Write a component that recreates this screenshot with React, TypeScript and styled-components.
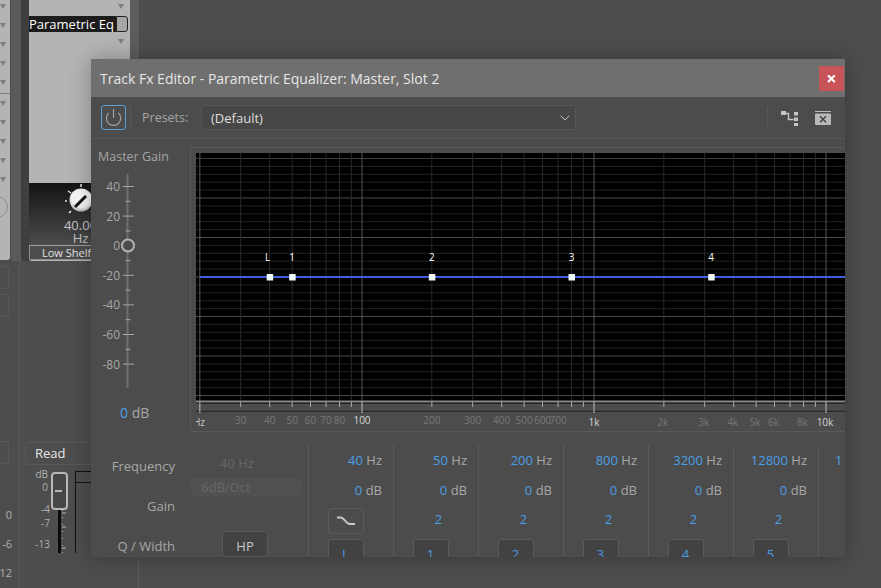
import React from 'react';
import styled, { createGlobalStyle } from 'styled-components';
import { Power, ChevronDown } from 'lucide-react';

const GlobalStyle = createGlobalStyle`
    html, body {
        margin: 0;
        padding: 0;
        background: #4d4d4d;
    }
    body {
        font-family: 'Open Sans', 'Liberation Sans', sans-serif;
    }
`;

const BLUE = '#4a9fe6';

// x position in the graph svg, 232px a decade with 100Hz at x=166
const freqX = (hz: number) => 166 + 232 * Math.log10(hz / 100);
const dbY = (db: number) => 5.5 + (40 - db) * 1.975;

const minorFreqs = [30, 40, 50, 60, 70, 80, 90, 200, 300, 400, 500, 600, 700, 800, 900, 2000, 3000, 4000, 5000, 6000, 7000, 8000, 9000];
const majorFreqs = [20, 100, 1000, 10000];
const freqLabels: [number, string][] = [[30, '30'], [40, '40'], [50, '50'], [60, '60'], [70, '70'], [80, '80'], [200, '200'], [300, '300'], [400, '400'], [500, '500'], [600, '600'], [700, '700']];
const kLabels: [number, string][] = [[2000, '2k'], [3000, '3k'], [4000, '4k'], [5000, '5k'], [6000, '6k'], [8000, '8k']];
const nodes: [number, string][] = [[40, 'L'], [50, '1'], [200, '2'], [800, '3'], [3200, '4']];

const dbLines: number[] = [];
for (let db = 40; db >= -88; db -= 4) dbLines.push(db);

const bands = [
    { hz: '40', q: null, btn: 'L' },
    { hz: '50', q: '2', btn: '1' },
    { hz: '200', q: '2', btn: '2' },
    { hz: '800', q: '2', btn: '3' },
    { hz: '3200', q: '2', btn: '4' },
    { hz: '12800', q: '2', btn: '5' },
];

const Graph = () => (
    <svg width="649" height="279" viewBox="0 0 649 279" style={{ display: 'block' }}>
        <rect x="0" y="0" width="649" height="248" fill="#000" />
        {dbLines.map(db => (
            <line key={db} x1="0" x2="649" y1={dbY(db)} y2={dbY(db)}
                stroke={db % 20 === 0 ? (db === 40 ? '#3a3a3a' : '#4a4a4a') : '#222'} strokeWidth="1" />
        ))}
        {minorFreqs.map(f => (
            <g key={f}>
                <line x1={freqX(f)} x2={freqX(f)} y1="0" y2="248" stroke="#2a2a2a" />
                <line x1={freqX(f)} x2={freqX(f)} y1="248" y2="254" stroke="#aaa" />
            </g>
        ))}
        {majorFreqs.map(f => (
            <g key={f}>
                <line x1={freqX(f)} x2={freqX(f)} y1="0" y2="248" stroke="#555" />
                <line x1={freqX(f)} x2={freqX(f)} y1="248" y2="260" stroke="#bbb" />
            </g>
        ))}
        <rect x="0" y="247.5" width="649" height="1.5" fill="#8a8a8a" />
        <line x1="4" x2="649" y1={dbY(-20)} y2={dbY(-20)} stroke="#3f5fe0" strokeWidth="2" />
        {nodes.map(([f, n]) => (
            <g key={n}>
                <rect x={freqX(f) - 3} y={dbY(-20) - 3} width="6.5" height="6.5" fill="#eef8f8" />
                <text x={freqX(f) - (n === 'L' ? 2 : 0)} y="108" fontSize="10" fill="#fff" textAnchor="middle" fontFamily="'Open Sans', sans-serif">{n}</text>
            </g>
        ))}
        {freqLabels.map(([f, t]) => (
            <text key={t} x={freqX(f)} y="271" fontSize="10" fill="#777" textAnchor="middle" fontFamily="'Open Sans', sans-serif">{t}</text>
        ))}
        {kLabels.map(([f, t]) => (
            <text key={t} x={freqX(f) - 1} y="273" fontSize="10" fill="#777" textAnchor="middle" fontFamily="'Open Sans', sans-serif">{t}</text>
        ))}
        <text x="166" y="271" fontSize="10" fill="#d6d6d6" textAnchor="middle" fontFamily="'Open Sans', sans-serif">100</text>
        <text x="398" y="273" fontSize="10" fill="#d6d6d6" textAnchor="middle" fontFamily="'Open Sans', sans-serif">1k</text>
        <text x="629" y="273" fontSize="10" fill="#d6d6d6" textAnchor="middle" fontFamily="'Open Sans', sans-serif">10k</text>
        <text x="-3" y="273" fontSize="10" fill="#c8c8c8" fontFamily="'Open Sans', sans-serif">Hz</text>
    </svg>
);

const gainLabels = [40, 20, 0, -20, -40, -60, -80];

const GainSlider = () => (
    <svg width="60" height="222" viewBox="0 0 60 222" style={{ display: 'block' }}>
        <rect x="35.5" y="0" width="2" height="214" fill="#6e6e6e" />
        {gainLabels.map((g, i) => {
            const y = 12.5 + i * 29.6;
            return (
                <g key={g}>
                    {g !== 0 && <line x1="32" x2="43" y1={y} y2={y} stroke="#a8a8a8" />}
                    {i < 6 && <line x1="34.5" x2="39.5" y1={y + 14.8} y2={y + 14.8} stroke="#a8a8a8" />}
                    <text x="29" y={y + 4.5} fontSize="12" fill="#a8a8a8" textAnchor="end" fontFamily="'Open Sans', sans-serif">{g}</text>
                </g>
            );
        })}
        <circle cx="37" cy="71.5" r="6" fill="#4c4c4c" stroke="#b4b4b4" strokeWidth="2" />
    </svg>
);

const GraphIcon = () => (
    <svg width="17" height="16" viewBox="0 0 17 16">
        <rect x="0" y="1" width="5" height="4" fill="#c4c4c4" />
        <path d="M4 3.5h3.5v6h5" stroke="#c4c4c4" strokeWidth="1.4" fill="none" />
        <rect x="13" y="2" width="4" height="3.5" fill="#c4c4c4" />
        <rect x="13" y="7.5" width="4" height="3.5" fill="#c4c4c4" />
        <rect x="13" y="13" width="4" height="3" fill="#c4c4c4" />
    </svg>
);

const ClearIcon = () => (
    <svg width="16" height="14" viewBox="0 0 16 14">
        <rect x="0" y="0" width="16" height="1" fill="#bbb" />
        <rect x="0" y="2.5" width="16" height="11.5" rx="1" fill="#b8b8b8" />
        <path d="M5 5.2l6 6M11 5.2l-6 6" stroke="#3c3c3c" strokeWidth="1.3" />
    </svg>
);

const ShelfIcon = () => (
    <svg width="20" height="10" viewBox="0 0 20 10">
        <path d="M1 1.5h4c3 0 5 6.5 9 6.5h5" stroke="#c8c8c8" strokeWidth="1.8" fill="none" />
    </svg>
);

const KnobDrawing = () => (
    <svg width="36" height="36" viewBox="0 0 36 36">
        <defs>
            <radialGradient id="knobFace" cx="50%" cy="40%" r="60%">
                <stop offset="0%" stopColor="#ffffff" />
                <stop offset="70%" stopColor="#f2f2f2" />
                <stop offset="100%" stopColor="#b0b0b0" />
            </radialGradient>
        </defs>
        <g stroke="#e8e8e8" strokeWidth="1.5">
            <path d="M18 1v3M5 8l3 2M31 8l-3 2M2 18h2M34 18h-2M6 30l2-2M30 30l-2-2" />
        </g>
        <circle cx="18" cy="17" r="11.5" fill="url(#knobFace)" />
        <path d="M12 24L23 13" stroke="#111" strokeWidth="3" />
    </svg>
);

const FaderScale = () => (
    <svg width="120" height="88" viewBox="0 0 120 88" style={{ display: 'block' }}>
        <g fontFamily="'Open Sans', sans-serif" fontSize="10" fill="#b0b0b0" textAnchor="end">
            <text x="28" y="13">dB</text>
            <text x="28" y="26">0</text>
            <text x="30" y="48">-4</text>
            <text x="30" y="62">-7</text>
            <text x="30" y="83">-13</text>
            <text x="111" y="80">-12</text>
        </g>
        <rect x="38" y="45" width="3" height="43" fill="#0c0c0c" />
        <line x1="42.5" x2="42.5" y1="45" y2="88" stroke="#b8b8b8" strokeDasharray="1 6" />
        <line x1="42" x2="46" y1="48" y2="48" stroke="#b8b8b8" />
        <line x1="42" x2="46" y1="62" y2="62" stroke="#b8b8b8" />
        <line x1="42" x2="46" y1="83" y2="83" stroke="#b8b8b8" />
        <path d="M55.5 88V6.5H71M55.5 17.5H91" stroke="#111" fill="none" />
        <line x1="88.5" x2="88.5" y1="60" y2="88" stroke="#111" />
        <line x1="90" x2="90" y1="60" y2="88" stroke="#b8b8b8" strokeDasharray="1 6" />
        <line x1="92" x2="96" y1="75.5" y2="75.5" stroke="#b8b8b8" />
        <rect x="32" y="8" width="15" height="36" rx="3" fill="#474747" stroke="#b8b8b8" strokeWidth="2" />
        <rect x="35" y="25" width="7" height="2" fill="#b8b8b8" />
    </svg>
);

const App = () => (
    <Desktop>
        <GlobalStyle />
        <Mixer>
            <EdgeStrip>
                <EdgeRack>
                    {[0, 1, 2, 3, 4].map(i => <RackArrow key={i} />)}
                    <RackRule />
                    {[5, 6, 7, 8, 9].map(i => <RackArrow key={i} />)}
                    <RackDial />
                </EdgeRack>
                <EdgeStub $top={6} />
                <EdgeStub $top={5} />
                <EdgeStub $top={124} />
                <EdgeNumbers>
                    <span>0</span>
                    <span>-6</span>
                    <span>-12</span>
                </EdgeNumbers>
            </EdgeStrip>
            <MasterStrip>
                <MasterRack>
                    <FxSlots>
                        <RackArrowRight />
                        <FxRow>
                            <FxName>Parametric Eq</FxName>
                            <FxPick />
                        </FxRow>
                        <RackArrowRight />
                    </FxSlots>
                    <KnobPanel>
                        <KnobDrawing />
                        <KnobValue>40.00</KnobValue>
                        <KnobValue>Hz</KnobValue>
                    </KnobPanel>
                    <KnobName>Low Shelf Freq</KnobName>
                </MasterRack>
                <ReadSelect>Read</ReadSelect>
                <FaderScale />
            </MasterStrip>
        </Mixer>

        <Window>
            <TitleBar>
                <TitleText>Track Fx Editor - Parametric Equalizer: Master, Slot 2</TitleText>
                <CloseButton>×</CloseButton>
            </TitleBar>
            <Toolbar>
                <PowerButton><Power size={19} strokeWidth={1.4} /></PowerButton>
                <ToolDivider />
                <PresetLabel>Presets:</PresetLabel>
                <PresetSelect>
                    <span>(Default)</span>
                    <ChevronDown size={16} strokeWidth={1.4} color="#c8c8c8" />
                </PresetSelect>
                <ToolIcons>
                    <ToolDivider />
                    <GraphIcon />
                    <ClearIcon />
                </ToolIcons>
            </Toolbar>
            <MainRow>
                <GainColumn>
                    <GainTitle>Master Gain</GainTitle>
                    <GainSlider />
                    <GainValue><Blue>0</Blue> dB</GainValue>
                </GainColumn>
                <GraphPanel>
                    <Graph />
                </GraphPanel>
            </MainRow>
            <BottomRow>
                <LabelColumn>
                    <ParamLabel>Frequency</ParamLabel>
                    <ParamLabel>Gain</ParamLabel>
                    <ParamLabel>Q / Width</ParamLabel>
                </LabelColumn>
                <FilterColumn>
                    <DisabledText>40 Hz</DisabledText>
                    <DisabledSelect>
                        <span>6dB/Oct</span>
                        <ChevronDown size={15} strokeWidth={1.2} color="#636363" />
                    </DisabledSelect>
                    <HpButton>HP</HpButton>
                </FilterColumn>
                {bands.map(b => (
                    <BandColumn key={b.btn}>
                        <BandValue><Blue>{b.hz}</Blue> Hz</BandValue>
                        <BandValue><Blue>0</Blue> dB</BandValue>
                        {b.q ? <BandQ>{b.q}</BandQ> : <ShelfButton><ShelfIcon /></ShelfButton>}
                        <BandButton>{b.btn}</BandButton>
                    </BandColumn>
                ))}
                <LastBand><Blue>1</Blue></LastBand>
            </BottomRow>
        </Window>
    </Desktop>
);

export default App;

const Desktop = styled.div`
    position: relative;
    width: 881px;
    height: 588px;
    overflow: hidden;
    background: #4d4d4d;
`;

const Mixer = styled.div`
    display: flex;
    height: 100%;
`;

const EdgeStrip = styled.div`
    width: 19px;
    flex: none;
    border-right: 1px solid #585858;
`;

const EdgeRack = styled.div`
    width: 10px;
    height: 260px;
    box-sizing: border-box;
    background: #b4b4b4;
    border-radius: 0 0 3px 0;
    padding-top: 4px;
    overflow: hidden;
`;

const RackArrow = styled.div`
    width: 0;
    height: 0;
    margin: 0 0 14px 0;
    border-left: 3.5px solid transparent;
    border-right: 3.5px solid transparent;
    border-top: 5px solid #7e7e7e;
`;

const RackRule = styled.div`
    height: 1px;
    background: #7e7e7e;
    margin: -6px 0 7px;
`;

const RackDial = styled.div`
    width: 22px;
    height: 22px;
    margin: 0 0 0 -14px;
    box-sizing: border-box;
    border: 1px solid #8e8e8e;
    border-radius: 50%;
`;

const EdgeStub = styled.div<{ $top: number }>`
    width: 9px;
    height: 23px;
    margin-top: ${p => p.$top}px;
    box-sizing: border-box;
    border: 1px solid #585858;
    border-left: none;
    border-radius: 0 3px 3px 0;
`;

const EdgeNumbers = styled.div`
    display: flex;
    flex-direction: column;
    margin: 44px 0 0 -14px;
    width: 26px;
    text-align: right;
    font-size: 11px;
    line-height: 14px;
    color: #b0b0b0;

    span + span {
        margin-top: 15px;
    }
`;

const MasterStrip = styled.div`
    flex: none;
    width: 118px;
    display: flex;
    flex-direction: column;
    border-right: 1px solid #5c5c5c;
    background: #4d4d4d;
`;

const MasterRack = styled.div`
    width: 101px;
    height: 261px;
    margin-left: 9px;
    box-sizing: border-box;
    background: #b4b4b4;
    border-radius: 0 0 3px 3px;
    display: flex;
    flex-direction: column;
    overflow: hidden;
    box-shadow: 9px 0 0 #5d5d5d, -8px 0 0 #3f3f3f, -18px 0 0 #5a5a5a;
`;

const FxSlots = styled.div`
    height: 183px;
    flex: none;
    padding-top: 4px;
    box-sizing: border-box;
`;

const RackArrowRight = styled(RackArrow)`
    margin: 0 0 0 89px;
`;

const FxRow = styled.div`
    display: flex;
    height: 16px;
    margin: 7px 2px 7px 0;
`;

const FxName = styled.div`
    width: 87px;
    box-sizing: border-box;
    background: #1c1c1c;
    color: #fff;
    font-size: 13px;
    line-height: 16px;
    white-space: nowrap;
    overflow: hidden;
`;

const FxPick = styled.div`
    flex: 1;
    background: #a6a6a6;
    border: 1px solid #222;
    border-radius: 0 3px 3px 0;
`;

const KnobPanel = styled.div`
    height: 62px;
    flex: none;
    background: linear-gradient(#141414, #4c4c4c);
    display: flex;
    flex-direction: column;
    align-items: center;
    color: #c8c8c8;
    padding-top: 0;
    overflow: hidden;
    padding-left: 2px;
`;

const KnobValue = styled.div`
    font-size: 13px;
    line-height: 13px;
    color: #c4c4c4;
`;

const KnobName = styled.div`
    height: 15px;
    flex: none;
    background: #4d4d4d;
    border: 1px solid #8e8e8e;
    border-top: 1px solid #a0a0a0;
    color: #e2e2e2;
    font-size: 11px;
    line-height: 14px;
    white-space: nowrap;
    text-align: center;
    box-sizing: border-box;
    overflow: hidden;
`;

const ReadSelect = styled.div`
    height: 23px;
    width: 72px;
    margin: 181px 0 0 5px;
    padding-left: 9px;
    box-sizing: border-box;
    border: 1px solid #585858;
    border-radius: 3px;
    color: #e6e6e6;
    font-size: 13px;
    line-height: 21px;
`;

const Window = styled.div`
    position: absolute;
    left: 91px;
    top: 59px;
    width: 754px;
    height: 498px;
    overflow: hidden;
    background: #4c4c4c;
    box-shadow: 0 0 22px rgba(0, 0, 0, 0.28);
    display: flex;
    flex-direction: column;
`;

const TitleBar = styled.div`
    height: 38px;
    flex: none;
    background: #6f6f6f;
    display: flex;
    align-items: center;
    justify-content: space-between;
    padding: 0 1px 0 9px;
`;

const TitleText = styled.div`
    color: #e6e6e6;
    font-size: 14px;
    white-space: nowrap;
`;

const CloseButton = styled.div`
    width: 25px;
    height: 25px;
    background: #c8545a;
    color: #fff;
    font-size: 18px;
    font-weight: 700;
    line-height: 25px;
    text-align: center;
`;

const Toolbar = styled.div`
    height: 42px;
    flex: none;
    box-sizing: border-box;
    display: flex;
    align-items: center;
    padding: 0 14px 0 10px;
    border-bottom: 1px solid #595959;
`;

const PowerButton = styled.div`
    width: 25px;
    height: 25px;
    box-sizing: border-box;
    border: 1px solid #5a9fd6;
    border-radius: 3px;
    color: #a8a8a8;
    display: flex;
    align-items: center;
    justify-content: center;
`;

const ToolDivider = styled.div`
    width: 1px;
    height: 22px;
    background: #585858;
    margin-left: 4px;
`;

const PresetLabel = styled.div`
    margin-left: 11px;
    width: 59px;
    color: #a4a4a4;
    font-size: 12.5px;
`;

const PresetSelect = styled.div`
    width: 375px;
    height: 25px;
    box-sizing: border-box;
    border: 1px solid #565656;
    border-radius: 3px;
    background: #474747;
    display: flex;
    align-items: center;
    justify-content: space-between;
    padding: 0 2px 0 9px;
    color: #dedede;
    font-size: 13px;
`;

const ToolIcons = styled.div`
    margin-left: auto;
    display: flex;
    align-items: center;
    gap: 13px;

    svg:last-child {
        margin-left: 4px;
    }
`;

const MainRow = styled.div`
    display: flex;
    height: 293px;
    flex: none;
    padding-top: 8px;
    box-sizing: border-box;
`;

const GainColumn = styled.div`
    width: 99px;
    flex: none;
    display: flex;
    flex-direction: column;
`;

const GainTitle = styled.div`
    margin: 1px 0 0 7px;
    height: 26px;
    font-size: 12.5px;
    line-height: 18px;
    color: #a4a4a4;
`;

const GainValue = styled.div`
    margin: 8px 0 0 29px;
    font-size: 14px;
    line-height: 18px;
    color: #a8a8a8;
`;

const Blue = styled.span`
    color: ${BLUE};
`;

const GraphPanel = styled.div`
    flex: 1;
    height: 285px;
    box-sizing: border-box;
    border-top: 1px solid #595959;
    border-left: 1px solid #595959;
    border-bottom: 1px solid #595959;
    padding: 5px 0 0 5px;
    overflow: hidden;
`;

const BottomRow = styled.div`
    flex: 1;
    display: flex;
    overflow: hidden;
    padding-top: 13px;
`;

const LabelColumn = styled.div`
    width: 84px;
    flex: none;
    padding-top: 11px;
    display: flex;
    flex-direction: column;
    align-items: flex-end;
    gap: 19px;
`;

const ParamLabel = styled.div`
    height: 21px;
    font-size: 13px;
    line-height: 21px;
    color: #a8a8a8;
`;

const FilterColumn = styled.div`
    width: 133px;
    flex: none;
    box-sizing: border-box;
    padding: 8px 0 0 16px;
    display: flex;
    flex-direction: column;
`;

const DisabledText = styled.div`
    margin-left: 29px;
    font-size: 13px;
    line-height: 20px;
    color: #676767;
`;

const DisabledSelect = styled.div`
    width: 110px;
    height: 26px;
    margin-top: 5px;
    box-sizing: border-box;
    background: #515151;
    border-radius: 3px;
    display: flex;
    align-items: center;
    justify-content: space-between;
    padding: 0 5px 0 10px;
    color: #676767;
    font-size: 13px;
`;

const ActionButton = styled.div`
    box-sizing: border-box;
    height: 26px;
    border: 1px solid #5a5a5a;
    border-radius: 3px;
    background: #424242;
    text-align: center;
    font-size: 13px;
    line-height: 28px;
    color: ${BLUE};
`;

const HpButton = styled(ActionButton)`
    width: 46px;
    margin: 35px 0 0 31px;
    color: #c8c8c8;
`;

const BandColumn = styled.div`
    width: 85px;
    flex: none;
    box-sizing: border-box;
    border-left: 1px solid #5a5a5a;
    display: flex;
    flex-direction: column;
    align-items: flex-end;
    padding: 0 11px 0 0;
    &:first-of-type {
        width: 91px;
    }
`;

const BandValue = styled.div`
    height: 30px;
    line-height: 30px;
    font-size: 13px;
    color: #a8a8a8;
    white-space: nowrap;
    flex: none;
`;

const BandQ = styled.div`
    align-self: center;
    height: 30px;
    line-height: 29px;
    font-size: 13px;
    color: ${BLUE};
    flex: none;
    margin-left: 16px;
`;

const ShelfButton = styled(ActionButton)`
    width: 36px;
    height: 26px;
    align-self: center;
    background: transparent;
    margin: 3px 0 1px;
    flex: none;
    display: flex;
    align-items: center;
    justify-content: center;
`;

const BandButton = styled(ActionButton)`
    width: 36px;
    align-self: center;
    margin-top: 4px;
    flex: none;
`;

const LastBand = styled.div`
    flex: none;
    border-left: 1px solid #5a5a5a;
    padding-left: 16px;
    font-size: 13px;
    line-height: 30px;
    width: 30px;
`;
